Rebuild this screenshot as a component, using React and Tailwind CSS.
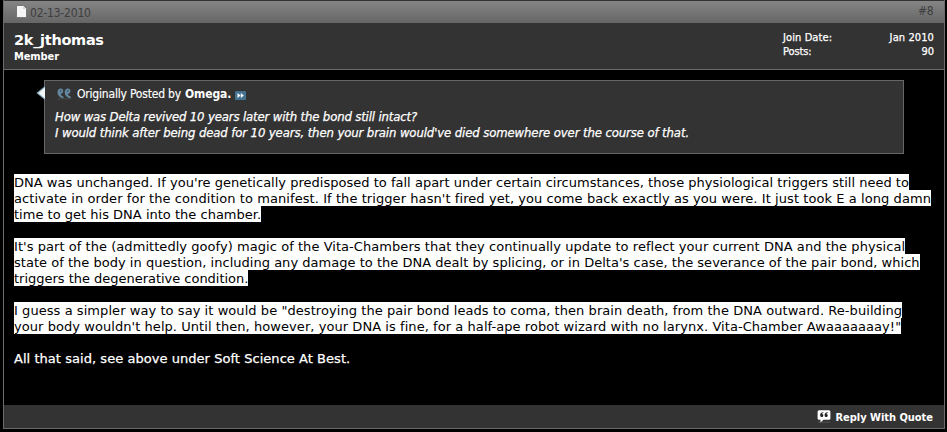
const paragraphs = [
  [
    { text: "DNA was unchanged. If you're genetically predisposed to fall apart under certain circumstances, those physiological triggers still need to", track: 'tracking-[0.014px]' },
    { text: "activate in order for the condition to manifest. If the trigger hasn't fired yet, you come back exactly as you were. It just took E a long damn", track: 'tracking-[0.073px]' },
    { text: 'time to get his DNA into the chamber.', track: 'tracking-[0.01px]' },
  ],
  [
    { text: "It's part of the (admittedly goofy) magic of the Vita-Chambers that they continually update to reflect your current DNA and the physical", track: 'tracking-[0.052px]' },
    { text: "state of the body in question, including any damage to the DNA dealt by splicing, or in Delta's case, the severance of the pair bond, which", track: 'tracking-[0.022px]' },
    { text: 'triggers the degenerative condition.', track: 'tracking-[-0.02px]' },
  ],
  [
    { text: 'I guess a simpler way to say it would be "destroying the pair bond leads to coma, then brain death, from the DNA outward. Re-building', track: 'tracking-[0.063px]' },
    { text: "your body wouldn't help. Until then, however, your DNA is fine, for a half-ape robot wizard with no larynx. Vita-Chamber Awaaaaaaay!\"", track: 'tracking-[0.06px]' },
  ],
];

function PageIcon() {
  return (
    <svg width="11" height="13" viewBox="0 0 11 13">
      <path d="M0.5 0.5H7.5L10.5 3.5V12.5H0.5Z" fill="#f6f6f6" stroke="#777" />
      <path d="M7 1L10 4H7Z" fill="#d2d2d2" />
    </svg>
  );
}

function QuoteMarks() {
  const mark = 'M3.2 0.6C5 0.3 6.3 1.5 6.2 3.2C6.1 4.9 4.9 5.8 3.5 5.8C3.8 7.2 4.8 8 6.4 8.4V10.2C3 9.9 0.5 7.5 0.5 4C0.5 2.2 1.5 0.9 3.2 0.6Z';
  return (
    <svg width="15" height="12" viewBox="0 0 15 12">
      <path d="M1 10.8H14" stroke="#4a4a4a" />
      <g fill="#6389a2">
        <path d={mark} />
        <path d={mark} transform="translate(7.2 0)" />
      </g>
      <g fill="#3f5b6d">
        <circle cx="3.6" cy="3" r="0.9" />
        <circle cx="10.8" cy="3" r="0.9" />
      </g>
    </svg>
  );
}

function ViewPost() {
  return (
    <svg width="11" height="9" viewBox="0 0 11 9">
      <rect width="11" height="9" rx="1" fill="#44728f" />
      <path d="M2.5 2L5.5 4.5L2.5 7ZM5.8 2L8.8 4.5L5.8 7Z" fill="#fff" />
    </svg>
  );
}

function ReplyIcon() {
  return (
    <svg width="14" height="13" viewBox="0 0 14 13">
      <path d="M1 12.2H13" stroke="#555" />
      <path d="M2 0.3H12Q13.4 0.3 13.4 1.8V8.4Q13.4 9.8 12 9.8H6.5L3.5 12.4V9.8H2Q0.6 9.8 0.6 8.4V1.8Q0.6 0.3 2 0.3Z" fill="#fff" />
      <g fill="#222">
        <path d="M6.4 2.3C4.2 2.3 3.2 3.4 3.2 5.2A1.6 1.6 0 1 0 5 3.9C5.1 3.5 5.6 3.2 6.4 3.1Z" />
        <path d="M10.8 2.3C8.6 2.3 7.6 3.4 7.6 5.2A1.6 1.6 0 1 0 9.4 3.9C9.5 3.5 10 3.2 10.8 3.1Z" />
      </g>
    </svg>
  );
}

export default function App() {
  return (
    <div className="h-[432px] w-[947px] overflow-hidden bg-black pl-[3px] font-['DejaVu_Sans_Condensed','DejaVu_Sans',sans-serif] whitespace-nowrap text-white">
      <div className="flex h-[429px] w-[942px] flex-col border-x border-b border-[#6b6b6b]">
        <div className="flex h-[23px] shrink-0 justify-between border-t border-[#333] bg-linear-to-b from-[#858585] to-[#666] pr-[11px] pl-[12px] text-[12px] leading-[15px] text-[#3e3e3e]">
          <div className="flex pt-[4px]">
            <PageIcon />
            <span className="mt-px ml-[3px] tracking-[-0.2px]">02-13-2010</span>
          </div>
          <span className="pt-[3px] tracking-[-0.5px]">#8</span>
        </div>

        <div className="flex h-[47px] shrink-0 justify-between border-b border-[#6b6b6b] bg-[#333] pr-[10px] pl-[10px]">
          <div className="pt-[8px] font-bold">
            <div className="font-['DejaVu_Sans',sans-serif] text-[14.5px] leading-[18px] tracking-[-0.3px]">2k_jthomas</div>
            <div className="pt-px text-[11px] leading-[14px] tracking-[-0.1px]">Member</div>
          </div>
          <dl className="grid w-[151px] grid-cols-2 content-start pt-[8px] text-[11px] leading-[14px] [-webkit-text-stroke:0.25px_white]">
            <dt className="tracking-[0.1px]">Join Date:</dt>
            <dd className="text-right tracking-[0.1px]">Jan 2010</dd>
            <dt className="tracking-[-0.1px]">Posts:</dt>
            <dd className="text-right">90</dd>
          </dl>
        </div>

        <div className="flex-1 px-[10px] pt-[10px]">
          <div className="relative ml-[30px] h-[74px] w-[860px] border border-[#666] bg-[#333] pl-[10px]">
            <svg className="absolute top-[5px] -left-[9px]" width="9" height="14" viewBox="0 0 9 14">
              <path d="M9 0V14L0.5 7Z" fill="#8fb0c4" />
              <path d="M9 1.5V12.5L2.5 7Z" fill="#f2f7fa" />
            </svg>
            <div className="flex h-[16px] items-center pt-[9px] text-[12px]">
              <span className="mr-[5px] ml-[2px]"><QuoteMarks /></span>
              <span className="tracking-[-0.19px] [-webkit-text-stroke:0.15px_white]">Originally Posted by</span>
              <span className="ml-[4px] font-bold tracking-[-0.1px]">Omega.</span>
              <span className="mt-[4px] ml-[4px]"><ViewPost /></span>
            </div>
            <div className="mt-[12px] text-[13px] leading-4 italic [-webkit-text-stroke:0.25px_white]">
              <div className="tracking-[-0.15px]">How was Delta revived 10 years later with the bond still intact?</div>
              <div className="tracking-[-0.114px]">I would think after being dead for 10 years, then your brain would've died somewhere over the course of that.</div>
            </div>
          </div>

          <div className="mt-[20px] space-y-4 font-['DejaVu_Sans',sans-serif] text-[13px] leading-[14px]">
            {paragraphs.map((lines, i) => (
              <div key={i}>
                {lines.map(({ text, track }) => (
                  <div key={text} className={`w-fit bg-white pt-[2px] text-black ${track}`}>{text}</div>
                ))}
              </div>
            ))}
            <div className="pt-[2px] tracking-[0.045px] [-webkit-text-stroke:0.25px_white]">All that said, see above under Soft Science At Best.</div>
          </div>
        </div>

        <div className="flex h-[23px] shrink-0 items-center justify-end bg-[#333] pr-[11px] text-[11px] font-bold">
          <ReplyIcon />
          <span className="ml-[5px] pt-[4px] tracking-[-0.03px]">Reply With Quote</span>
        </div>
      </div>
    </div>
  );
}
